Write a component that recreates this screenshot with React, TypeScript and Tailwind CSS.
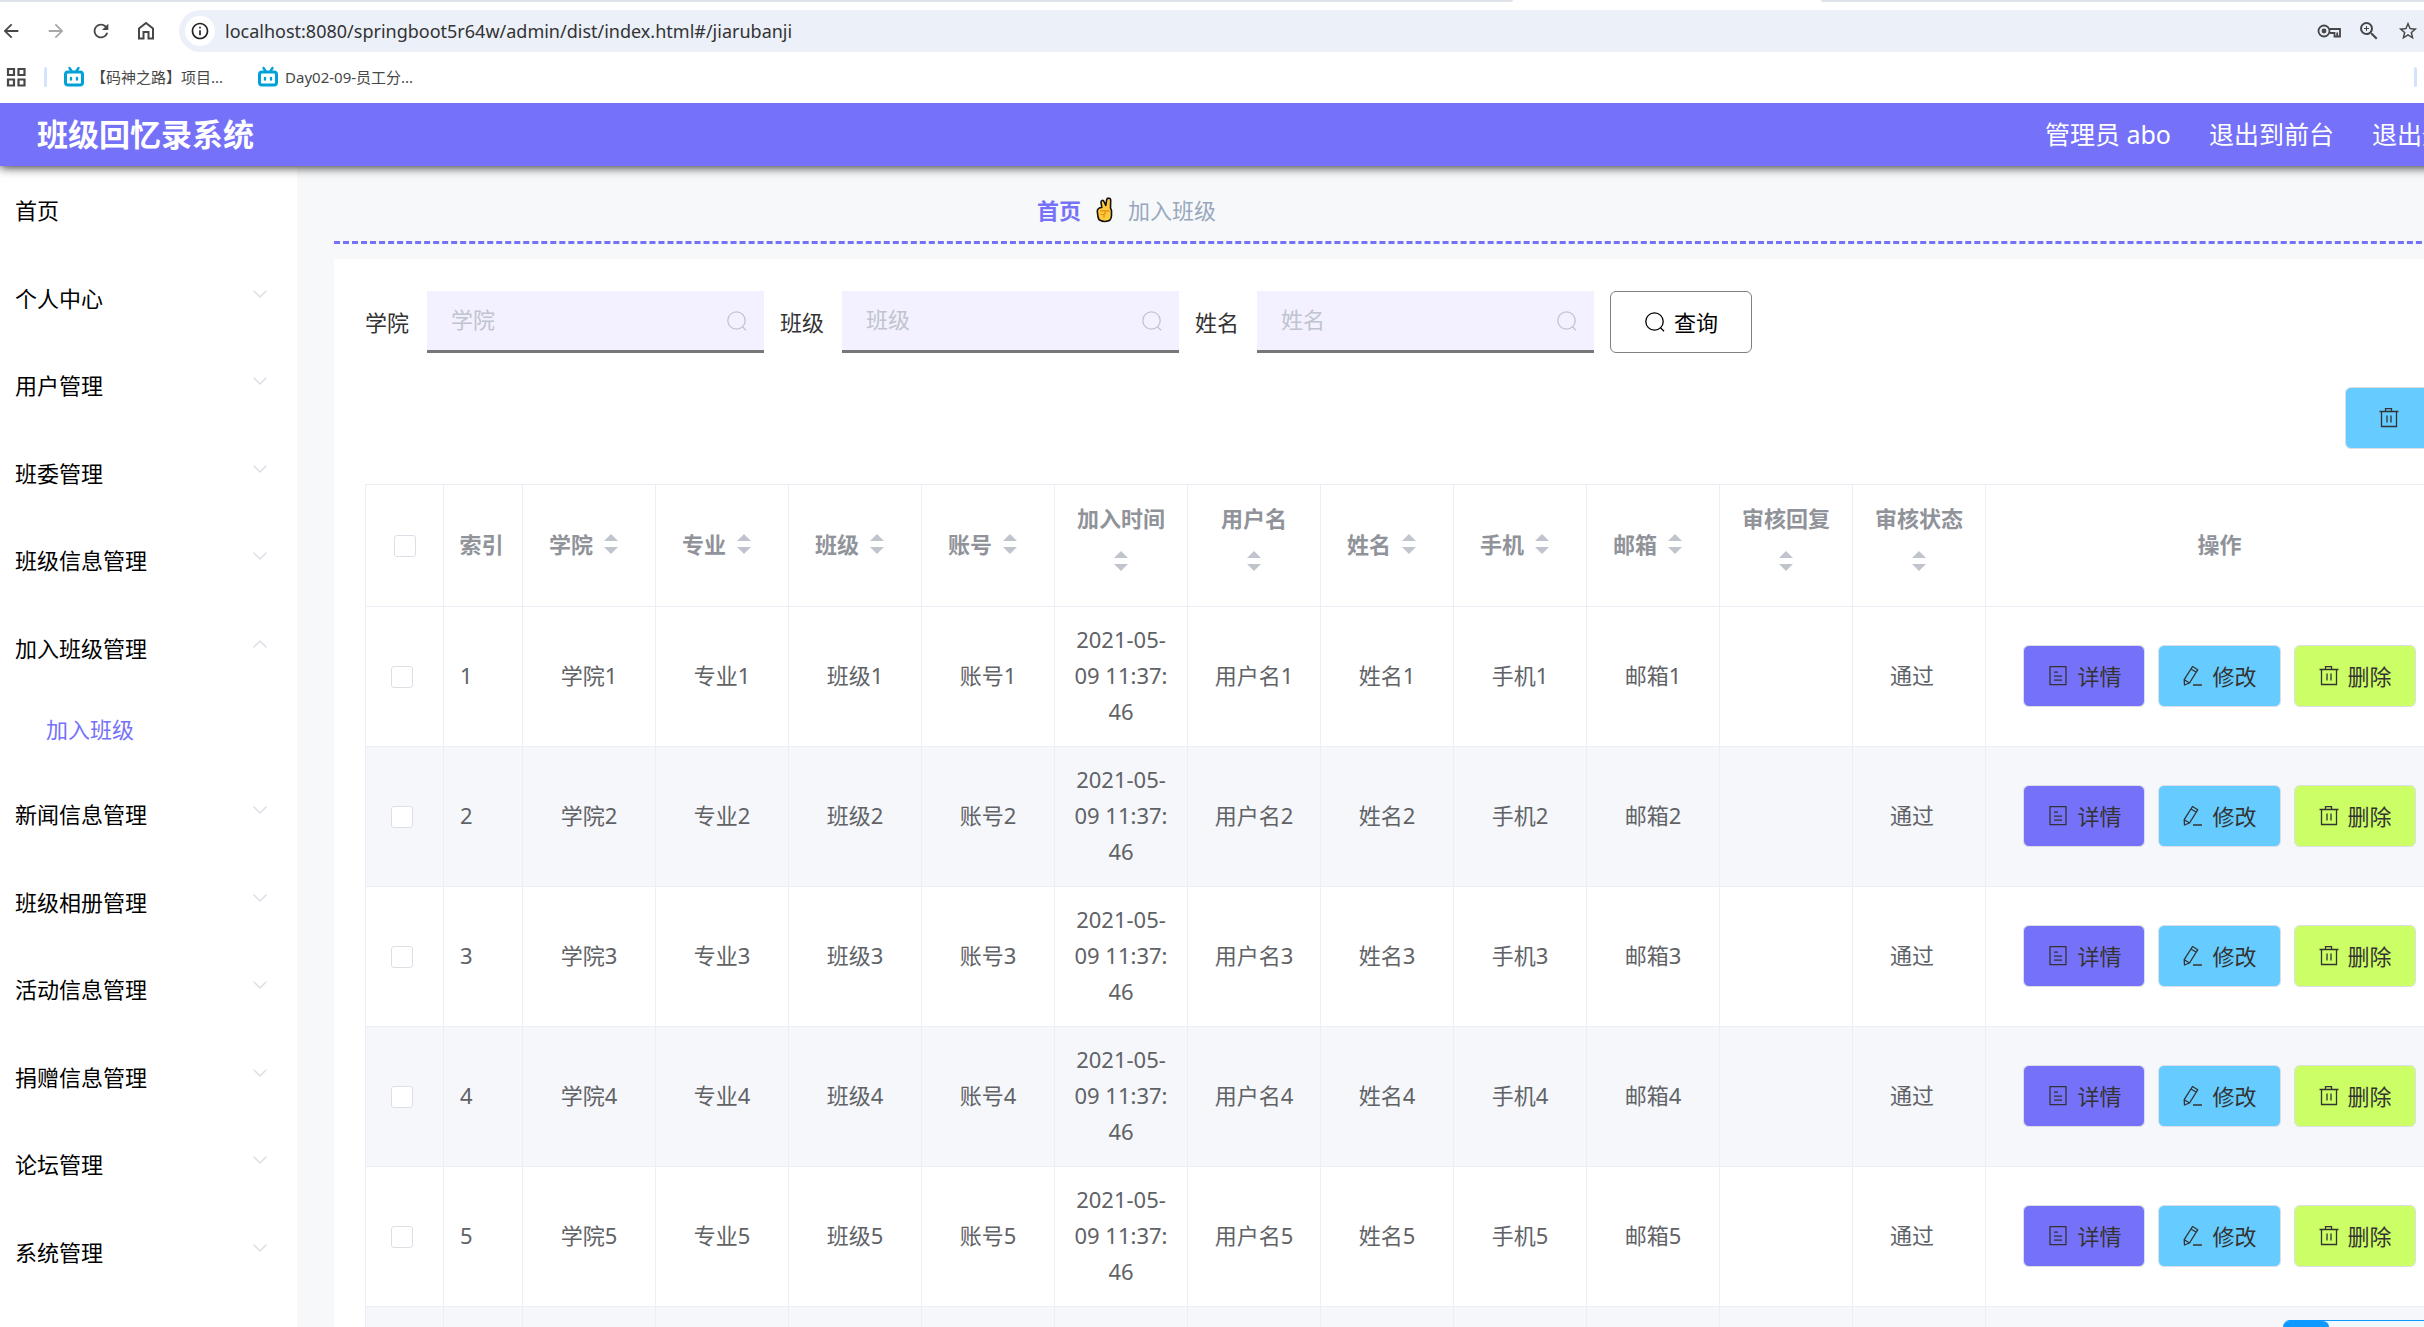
import React from "react";
import { ChevronDown, ChevronUp } from "lucide-react";
import { MdArrowBack, MdArrowForward, MdInfoOutline, MdRefresh, MdStarBorder, MdZoomIn } from "react-icons/md";

const menus = [
  { title: "首页" },
  { title: "个人中心", children: ["个人中心"] },
  { title: "用户管理", children: ["用户"] },
  { title: "班委管理", children: ["班委"] },
  { title: "班级信息管理", children: ["班级信息"] },
  { title: "加入班级管理", children: ["加入班级"], open: true },
  { title: "新闻信息管理", children: ["新闻信息"] },
  { title: "班级相册管理", children: ["班级相册"] },
  { title: "活动信息管理", children: ["活动信息"] },
  { title: "捐赠信息管理", children: ["捐赠信息"] },
  { title: "论坛管理", children: ["论坛"] },
  { title: "系统管理", children: ["系统"] },
];

const bookmarks = ["【码神之路】项目...", "Day02-09-员工分..."];

const filters = ["学院", "班级", "姓名"];

const columns = [
  { label: "学院" },
  { label: "专业" },
  { label: "班级" },
  { label: "账号" },
  { label: "加入时间", stacked: true },
  { label: "用户名", stacked: true },
  { label: "姓名" },
  { label: "手机" },
  { label: "邮箱" },
  { label: "审核回复", stacked: true },
  { label: "审核状态", stacked: true },
];

const rows = [1, 2, 3, 4, 5, 6];

function SearchIcon({ className }: { className?: string }) {
  return (
    <svg viewBox="0 0 22 22" className={className} fill="none" stroke="currentColor" strokeWidth="1.3">
      <circle cx="10.5" cy="10.5" r="8.7" />
      <path d="M16.5 16.8 20 20.2" />
    </svg>
  );
}

function DeleteIcon() {
  return (
    <svg viewBox="0 0 22 22" className="size-[22px]" fill="none" stroke="currentColor" strokeWidth="1.3">
      <path d="M1.5 4.5h19M7.5 4V1.7h6V4M3.5 4.500v15h15v-15M9 8.500v7M13 8.500v7" />
    </svg>
  );
}

function EditIcon() {
  return (
    <svg viewBox="0 0 22 22" className="size-[22px]" fill="none" stroke="currentColor" strokeWidth="1.3" strokeLinejoin="round">
      <path d="M10.5 1.5 15.8 4.7 7.5 18 2.5 20 2.2 14.7ZM9 4l5.3 3.2M2.2 14.7l5.3 3.3M11 20h9" />
    </svg>
  );
}

function TicketsIcon() {
  return (
    <svg viewBox="0 0 22 22" className="size-[22px]" fill="none" stroke="currentColor" strokeWidth="1.3">
      <path d="M3 1.7h16v18H3zM7 7.2h4M7 11.2h8M7 15.2h8" />
    </svg>
  );
}

function BiliIcon() {
  return (
    <svg viewBox="0 0 22 22" className="size-[22px]" fill="none" stroke="#00a1d6" strokeWidth="3" strokeLinecap="round">
      <rect x="2.5" y="6" width="17" height="13" rx="2.5" />
      <path d="M6.5 2 8.5 5M15.5 2l-2 3M8 12v1.500M14 12v1.500" strokeWidth="2.4" />
    </svg>
  );
}

function HomeIcon() {
  return (
    <svg viewBox="0 0 22 22" className="size-[22px]" fill="none" stroke="currentColor" strokeWidth="2">
      <path d="M4 18.500V8.500L11 3l7 5.500v10h-4.500V12h-5v6.500z" />
    </svg>
  );
}

function VictoryHand() {
  return (
    <svg viewBox="0 0 17 26" className="h-[26px] w-[17px]" stroke="#111" strokeWidth="1.6" strokeLinejoin="round">
      <path
        fill="#ffc83d"
        d="M5.800 10.500 5 5.300c-.300-2 2.300-2.700 3-.8L9.800 8.500l.900-5.800c.4-2.200 4-2 4 .5L14.500 11l1 2.500v5c0 3.600-2.500 6-6.500 6s-6.500-1.800-7-4.500l-.7-5.500c-.3-2 1.500-4 4.500-4Z"
      />
      <path fill="none" stroke="#e08f1a" strokeWidth="1.2" d="M4 13.800h9.500M9 14v3.500M4.500 17.500H8v3" />
    </svg>
  );
}

function SortCaret() {
  return (
    <span className="inline-flex w-9 flex-col items-center gap-[6px]">
      <svg viewBox="0 0 14 7" className="h-[7px] w-[14px] fill-[#c0c4cc]"><path d="M7 0l7 7H0z" /></svg>
      <svg viewBox="0 0 14 7" className="h-[7px] w-[14px] fill-[#c0c4cc]"><path d="M0 0h14L7 7z" /></svg>
    </span>
  );
}

function Checkbox({ label }: { label: string }) {
  return (
    <input
      type="checkbox"
      aria-label={label}
      className="block size-[22px] appearance-none rounded-[3px] border border-[#dcdfe6] bg-white checked:bg-[#7571f9]"
    />
  );
}

function BrowserBar() {
  return (
    <div className="relative z-20 h-[103px] bg-white text-[#474747]">
      <div className="flex h-[2px]">
        <div className="w-[1513px] rounded-br-full bg-[#dee3e9]" />
        <div className="w-[308px]" />
        <div className="flex-1 rounded-bl-full bg-[#dee3e9]" />
      </div>
      <div className="flex items-center pt-2">
        <div className="flex w-[179px] items-center gap-[23px]">
          <button aria-label="后退"><MdArrowBack className="size-[22px]" /></button>
          <button aria-label="前进" className="text-[#a8a8a8]"><MdArrowForward className="size-[22px]" /></button>
          <button aria-label="刷新"><MdRefresh className="size-[22px]" /></button>
          <button aria-label="主页"><HomeIcon /></button>
        </div>
        <div className="flex h-[42px] flex-1 items-center rounded-l-full bg-[#ecf0f9] pl-[6px]">
          <span className="flex size-[30px] items-center justify-center rounded-full bg-white text-[#222]">
            <MdInfoOutline className="size-5" />
          </span>
          <input
            aria-label="地址"
            className="ml-[10px] flex-1 bg-transparent text-[18px] text-[#333] outline-none"
            defaultValue="localhost:8080/springboot5r64w/admin/dist/index.html#/jiarubanji"
          />
          <div className="flex items-center gap-4 pr-[5px]">
            <svg viewBox="0 0 24 14" className="h-[14px] w-6" fill="none" stroke="currentColor" strokeWidth="1.8">
              <circle cx="7" cy="7" r="5.5" />
              <circle cx="7" cy="7" r="2.4" fill="currentColor" stroke="none" />
              <path d="M12.500 5H23v7.500h-5.500V9h-5M20.200 8.500v4" />
            </svg>
            <MdZoomIn className="size-6" />
            <MdStarBorder className="size-[22px]" />
          </div>
        </div>
      </div>
      <div className="flex items-center pt-[14px] pl-[6px] pr-[7px] text-[15px]">
        <svg viewBox="0 0 20 20" className="size-5" fill="none" stroke="currentColor" strokeWidth="2.2">
          <path d="M2 2h6v6H2zM12.500 2h6v6h-6zM2 12.500h6v6H2zM12.500 12.500h6v6h-6z" />
        </svg>
        <span className="ml-[18px] h-5 w-[3px] rounded bg-[#d3e3fd]" />
        <div className="ml-4 flex flex-1 gap-[34px]">
          {bookmarks.map((text) => (
            <a key={text} href="#" className="flex items-center gap-[6px]">
              <BiliIcon />
              {text}
            </a>
          ))}
        </div>
        <span className="h-5 w-[3px] rounded bg-[#d3e3fd]" />
      </div>
    </div>
  );
}

function Sidebar() {
  return (
    <nav className="w-[297px] shrink-0 bg-white text-black">
      <ul>
        {menus.map(({ title, children, open }) => (
          <li key={title} className="group">
            <a href="#" className="flex h-[88px] items-center justify-between pl-[15px] pr-[25px] group-even:h-[87px]">
              {title}
              {children &&
                (open ? (
                  <ChevronUp className="mb-2 size-6 text-[#dcdfe6]" strokeWidth={1.5} />
                ) : (
                  <ChevronDown className="mb-2 size-6 text-[#dcdfe6]" strokeWidth={1.5} />
                ))}
            </a>
            {open &&
              children.map((child) => (
                <a key={child} href="#" className="flex h-[79px] items-center pl-[46px] pb-[3px] text-[#7571f9]">
                  {child}
                </a>
              ))}
          </li>
        ))}
      </ul>
    </nav>
  );
}

const actionClass = "flex h-[62px] items-center gap-2 rounded-md border border-[#dcdfe6] text-[#333]";
const thClass = "border border-[#ebeef5] pb-[3px] font-bold";
const tdClass = "border border-[#ebeef5] pb-[3px]";

function DataTable() {
  return (
    <table className="w-full table-fixed border-collapse border border-[#ebeef5] text-[#606266]">
      <colgroup>
        <col className="w-[78px]" />
        <col className="w-[79px]" />
        {columns.map(({ label }) => (
          <col key={label} />
        ))}
        <col className="w-[468px]" />
      </colgroup>
      <thead>
        <tr className="h-[122px] text-[#909399]">
          <th className="border border-[#ebeef5] pl-7">
            <Checkbox label="全选" />
          </th>
          <th className={`${thClass} pr-[3px]`}>索引</th>
          {columns.map(({ label, stacked }) => (
            <th key={label} className={thClass}>
              {stacked ? (
                <div className="flex flex-col items-center">
                  <span className="leading-[34px]">{label}</span>
                  <span className="flex h-[52px] items-center"><SortCaret /></span>
                </div>
              ) : (
                <div className="flex items-center justify-center">
                  {label}
                  <SortCaret />
                </div>
              )}
            </th>
          ))}
          <th className={thClass}>操作</th>
        </tr>
      </thead>
      <tbody>
        {rows.map((n) => (
          <tr key={n} className="h-[140px] text-center even:bg-[#f5f7fa]">
            <td className="border border-[#ebeef5] pl-[25px]">
              <Checkbox label={`选择第${n}行`} />
            </td>
            <td className={`${tdClass} pl-4 text-left`}>{n}</td>
            <td className={tdClass}>学院{n}</td>
            <td className={tdClass}>专业{n}</td>
            <td className={tdClass}>班级{n}</td>
            <td className={tdClass}>账号{n}</td>
            <td className={`${tdClass} px-[15px] leading-9 break-all`}>2021-05-09 11:37:46</td>
            <td className={tdClass}>用户名{n}</td>
            <td className={tdClass}>姓名{n}</td>
            <td className={tdClass}>手机{n}</td>
            <td className={tdClass}>邮箱{n}</td>
            <td className={tdClass} />
            <td className={`${tdClass} pr-[14px]`}>通过</td>
            <td className="border border-[#ebeef5] pb-[2px]">
              <div className="flex justify-center gap-[13px]">
                <button className={`${actionClass} bg-[#7571f9] px-[23px]`}><TicketsIcon />详情</button>
                <button className={`${actionClass} bg-[#66ccff] px-[23px]`}><EditIcon />修改</button>
                <button className={`${actionClass} bg-[#ccff66] px-[23px]`}><DeleteIcon />删除</button>
              </div>
            </td>
          </tr>
        ))}
      </tbody>
    </table>
  );
}

export default function App() {
  return (
    <div className="relative h-screen overflow-hidden bg-[#f7f8fa] font-['Noto_Sans','Noto_Sans_CJK_SC',sans-serif]">
      <BrowserBar />
      {/* the admin page is wider than the window, its right side runs out of view */}
      <div className="w-[calc(100%+98px)] text-[22px] leading-[34px]">
        <header className="relative z-10 flex h-[63px] items-center justify-between bg-[#7571f9] pl-[37px] pr-[50px] pb-[2px] text-white shadow-[0_1px_10px_#222]">
          <h1 className="text-[31px] font-bold">班级回忆录系统</h1>
          <div className="flex gap-[38px] text-[25px]">
            <span>管理员 abo</span>
            <a href="#">退出到前台</a>
            <a href="#">退出登录</a>
          </div>
        </header>
        <div className="flex">
          <Sidebar />
          <main className="min-w-0 flex-1 px-[37px]">
            <div className="flex h-[78px] items-center gap-[15px] border-b-3 border-dashed border-[#7571f9] pl-[703px] pt-3">
              <a href="#" className="font-bold text-[#7571f9]">首页</a>
              <VictoryHand />
              <span className="text-[#97a8be]">加入班级</span>
            </div>
            <section className="mt-[15px] bg-white pt-8">
              <form className="flex items-center gap-4 px-[31px]">
                {filters.map((name) => (
                  <label key={name} className="flex items-center gap-[18px] text-[#333]">
                    {name}
                    <span className="flex h-[62px] w-[337px] items-center border-b-3 border-[#777] bg-[#f3f1ff] pl-6 pr-4 text-[#c0c4cc]">
                      <input className="min-w-0 flex-1 bg-transparent pb-1 outline-none placeholder:text-[#c0c4cc]" placeholder={name} />
                      <SearchIcon className="size-[22px]" />
                    </span>
                  </label>
                ))}
                <button type="button" className="flex h-[62px] items-center gap-2 rounded-md border border-[#808080] px-[33px] text-black">
                  <SearchIcon className="size-[22px]" />
                  查询
                </button>
              </form>
              <div className="flex justify-end pt-[34px]">
                <button aria-label="删除" className={`${actionClass} w-[140px] bg-[#66ccff] px-8`}><DeleteIcon /></button>
              </div>
              <div className="px-[31px] pt-[35px]">
                <DataTable />
              </div>
            </section>
          </main>
        </div>
      </div>
      <div className="absolute right-0 bottom-0 flex h-[7px] w-[141px] overflow-hidden rounded-tl-[10px] border-t border-[#0d99ff] bg-[#f0f9ff]">
        <span className="w-[46px] rounded-tr-md bg-[#0d99ff]" />
      </div>
    </div>
  );
}
